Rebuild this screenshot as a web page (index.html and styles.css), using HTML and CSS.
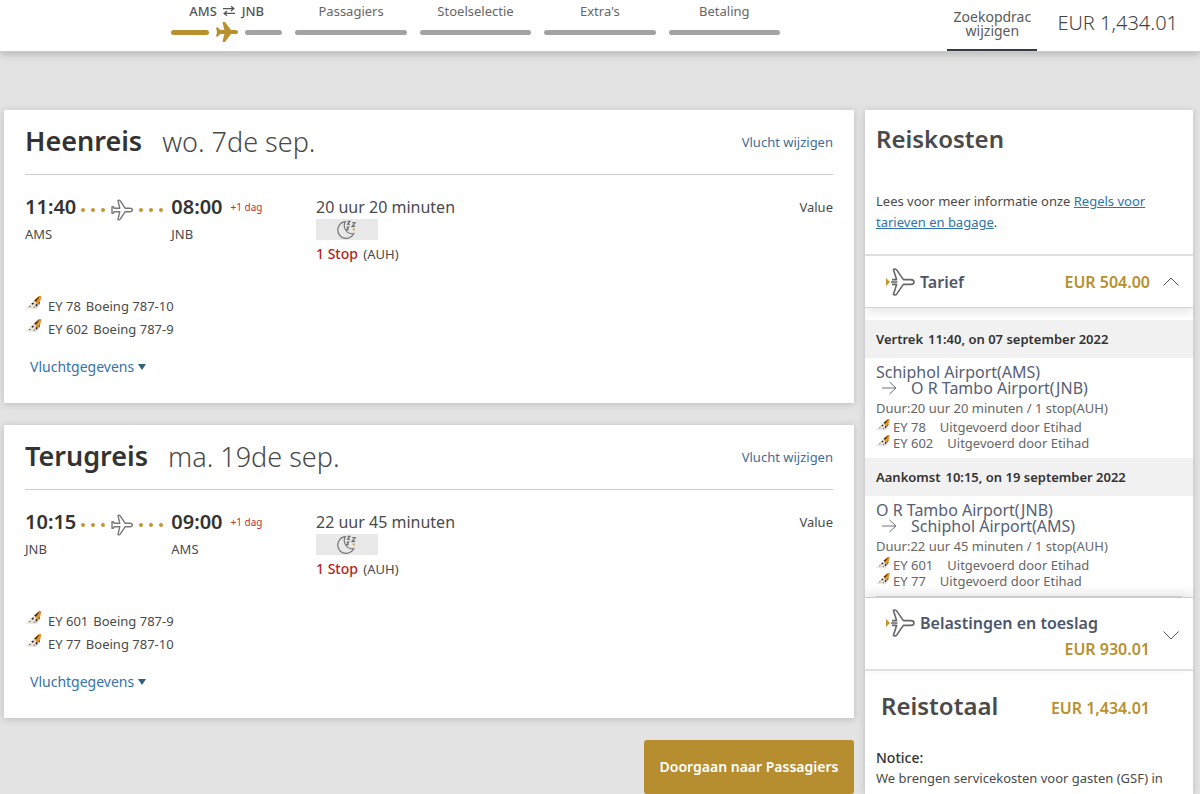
FILE: index.html
```html
<!DOCTYPE html>
<html lang="nl">
<head>
<meta charset="utf-8">
<meta name="viewport" content="width=device-width, initial-scale=1">
<title>Vluchten</title>
<link rel="stylesheet" href="styles.css">
</head>
<body>
<svg class="sprite" aria-hidden="true">
  <symbol id="plane-outline" viewBox="0 0 22 22">
    <path d="M1 7.8H2.3L3.2 9.3H8.8L7 1.6Q8.2.6 9.2 1.9L14.2 9.3H19C20.5 9.3 21.4 10.2 21.4 11S20.5 12.7 19 12.7H14.2L9.2 20.1Q8.2 21.4 7 20.4L8.8 12.7H3.2L2.3 14.2H1Z" fill="none" stroke="#777" stroke-width="1.4" stroke-linejoin="round"/>
  </symbol>
  <symbol id="plane-price" viewBox="0 0 30 28">
    <path d="M1 10 5 14 1 18Z" fill="#c3962f"/>
    <path d="M6 14H12.5M7 11.6H11.6L8.4 1.6C9.2.7 10.8.9 11.8 2.1L18.4 11.6H25.6C27.5 11.6 29 12.7 29 14S27.5 16.4 25.6 16.4H18.4L11.8 25.9C10.8 27.1 9.2 27.3 8.4 26.4L11.6 16.4H7" fill="none" stroke="#666" stroke-width="1.6" stroke-linejoin="round"/>
  </symbol>
  <symbol id="tail" viewBox="0 0 16 14">
    <path d="M0 12.5 12.5.6Q14.5-.3 16 .4L12.6 12Q12 13.5 10 13.3Z" fill="#ebe5dc"/>
    <path d="M8.5 4.4 12.5.6Q14.5-.3 16 .4L14 7.5 11.5 8.5Z" fill="#e3952b"/>
    <path d="M8.8 4.5 14.5.2 10.5 5.5ZM13.2 7 14.6 6 13.4 9.4ZM6 7.2 8 6.4 8.4 8 6.6 8.8ZM10 8.6 11.8 7.8 12 10 10.4 10.8ZM3.2 10.2 5 9.9 4.6 11.2ZM7.8 11 9.2 10.6 9 12.1Z" fill="#2e2422"/>
  </symbol>
  <symbol id="night" viewBox="0 0 20 20">
    <path d="M8.3 1.6A8.4 8.4 0 1 0 16.8 13.6 8.2 8.2 0 0 1 8.3 1.6Z" fill="none" stroke="#777" stroke-width="1.2"/>
    <path d="M10.5 1.2H13L10.5 4.2H13M15 2.8H18.2L15 6.4H18.2M9.6 7H11.8L9.6 9.8H11.8" fill="none" stroke="#666" stroke-width="1.1"/>
    <path d="M15.2 8.6H18L17 11.2Z" fill="#d29a24"/>
  </symbol>
  <symbol id="arrow" viewBox="0 0 16 14">
    <path d="M1 7H15M8.5 1 15 7 8.5 13" fill="none" stroke="#6b7280" stroke-width="1"/>
  </symbol>
</svg>

<header class="topbar">
  <ol class="steps">
    <li class="step step-current">
      <span class="step-label">AMS
        <svg class="swap" viewBox="0 0 12 10" aria-hidden="true"><path d="M0 2.6H10.5M8 .3 10.8 2.6 8 4.9M12 7.4H1.5M4 5.1 1.2 7.4 4 9.7" fill="none" stroke="#555" stroke-width="1.3"/></svg>
        JNB</span>
      <span class="step-track">
        <span class="bar bar-done"></span>
        <svg class="step-plane" viewBox="0 0 22 22" aria-hidden="true"><path d="M0 6.5H2L4.3 8.9H8.4L6.5 1.4Q7.6.2 9.2 1.2L15 8.9H19.4C21 8.9 22 9.9 22 11S21 13.1 19.4 13.1H15L9.2 20.8Q7.6 21.8 6.5 20.6L8.4 13.1H4.3L2 15.5H0L1 11Z" fill="#b8902f"/></svg>
        <span class="bar"></span>
      </span>
    </li>
    <li class="step"><span class="step-label">Passagiers</span><span class="step-track"><span class="bar"></span></span></li>
    <li class="step"><span class="step-label">Stoelselectie</span><span class="step-track"><span class="bar"></span></span></li>
    <li class="step"><span class="step-label">Extra's</span><span class="step-track"><span class="bar"></span></span></li>
    <li class="step"><span class="step-label">Betaling</span><span class="step-track"><span class="bar"></span></span></li>
  </ol>
  <div class="topbar-side">
    <button class="edit-search" type="button">Zoekopdrac<br>wijzigen</button>
    <span class="topbar-total">EUR 1,434.01</span>
  </div>
</header>

<div class="page">
  <main class="trips">
    <section class="trip">
      <div class="trip-head">
        <h2 class="trip-title">Heenreis</h2>
        <span class="trip-date">wo. 7de sep.</span>
        <a class="trip-edit" href="#">Vlucht wijzigen</a>
      </div>
      <div class="trip-body">
        <div class="route">
          <div class="stop"><strong class="time">11:40</strong><span class="code">AMS</span></div>
          <div class="path"><i class="dot"></i><i class="dot"></i><i class="dot"></i><svg class="path-plane" aria-hidden="true"><use href="#plane-outline"/></svg><i class="dot"></i><i class="dot"></i><i class="dot"></i></div>
          <div class="stop"><strong class="time">08:00</strong><span class="code">JNB</span></div>
          <span class="plus-day">+1 dag</span>
        </div>
        <div class="duration">
          <span class="duration-text">20 uur 20 minuten</span>
          <span class="night"><svg class="night-icon" aria-hidden="true"><use href="#night"/></svg></span>
          <span class="stops"><b class="stops-count">1 Stop</b> (AUH)</span>
        </div>
        <span class="fare">Value</span>
      </div>
      <ul class="flights">
        <li class="flight"><svg class="tail" aria-hidden="true"><use href="#tail"/></svg><span>EY 78</span><span>Boeing 787-10</span></li>
        <li class="flight"><svg class="tail" aria-hidden="true"><use href="#tail"/></svg><span>EY 602</span><span>Boeing 787-9</span></li>
      </ul>
      <button class="details" type="button">Vluchtgegevens<span class="caret"></span></button>
    </section>

    <section class="trip">
      <div class="trip-head">
        <h2 class="trip-title">Terugreis</h2>
        <span class="trip-date">ma. 19de sep.</span>
        <a class="trip-edit" href="#">Vlucht wijzigen</a>
      </div>
      <div class="trip-body">
        <div class="route">
          <div class="stop"><strong class="time">10:15</strong><span class="code">JNB</span></div>
          <div class="path"><i class="dot"></i><i class="dot"></i><i class="dot"></i><svg class="path-plane" aria-hidden="true"><use href="#plane-outline"/></svg><i class="dot"></i><i class="dot"></i><i class="dot"></i></div>
          <div class="stop"><strong class="time">09:00</strong><span class="code">AMS</span></div>
          <span class="plus-day">+1 dag</span>
        </div>
        <div class="duration">
          <span class="duration-text">22 uur 45 minuten</span>
          <span class="night"><svg class="night-icon" aria-hidden="true"><use href="#night"/></svg></span>
          <span class="stops"><b class="stops-count">1 Stop</b> (AUH)</span>
        </div>
        <span class="fare">Value</span>
      </div>
      <ul class="flights">
        <li class="flight"><svg class="tail" aria-hidden="true"><use href="#tail"/></svg><span>EY 601</span><span>Boeing 787-9</span></li>
        <li class="flight"><svg class="tail" aria-hidden="true"><use href="#tail"/></svg><span>EY 77</span><span>Boeing 787-10</span></li>
      </ul>
      <button class="details" type="button">Vluchtgegevens<span class="caret"></span></button>
    </section>

    <button class="continue" type="button">Doorgaan naar Passagiers</button>
  </main>

  <aside class="costs">
    <div class="costs-intro">
      <h2 class="costs-title">Reiskosten</h2>
      <p class="costs-text">Lees voor meer informatie onze <a class="rules" href="#">Regels voor tarieven en bagage</a>.</p>
    </div>
    <button class="fold" type="button">
      <svg class="fold-plane" aria-hidden="true"><use href="#plane-price"/></svg>
      <span class="fold-name">Tarief</span>
      <span class="fold-price">EUR 504.00</span>
      <svg class="chevron" viewBox="0 0 16 9" aria-hidden="true"><path d="M.5 8.5 8 1 15.5 8.5" fill="none" stroke="#555"/></svg>
    </button>
    <div class="legs">
      <h3 class="leg-date"><span>Vertrek</span><span>11:40, on 07 september 2022</span></h3>
      <div class="leg">
        <div class="airport">Schiphol Airport(AMS)</div>
        <div class="airport airport-to"><svg class="arrow" aria-hidden="true"><use href="#arrow"/></svg>O R Tambo Airport(JNB)</div>
        <div class="leg-duration">Duur:20 uur 20 minuten / 1 stop(AUH)</div>
        <div class="carrier"><svg class="tail-small" aria-hidden="true"><use href="#tail"/></svg><span class="carrier-code">EY 78</span>Uitgevoerd door Etihad</div>
        <div class="carrier"><svg class="tail-small" aria-hidden="true"><use href="#tail"/></svg><span class="carrier-code">EY 602</span>Uitgevoerd door Etihad</div>
      </div>
      <h3 class="leg-date"><span>Aankomst</span><span>10:15, on 19 september 2022</span></h3>
      <div class="leg">
        <div class="airport">O R Tambo Airport(JNB)</div>
        <div class="airport airport-to"><svg class="arrow" aria-hidden="true"><use href="#arrow"/></svg>Schiphol Airport(AMS)</div>
        <div class="leg-duration">Duur:22 uur 45 minuten / 1 stop(AUH)</div>
        <div class="carrier"><svg class="tail-small" aria-hidden="true"><use href="#tail"/></svg><span class="carrier-code">EY 601</span>Uitgevoerd door Etihad</div>
        <div class="carrier"><svg class="tail-small" aria-hidden="true"><use href="#tail"/></svg><span class="carrier-code">EY 77</span>Uitgevoerd door Etihad</div>
      </div>
      <hr class="legs-end">
    </div>
    <button class="fold fold-tall" type="button">
      <svg class="fold-plane" aria-hidden="true"><use href="#plane-price"/></svg>
      <span class="fold-name">Belastingen en toeslag</span>
      <span class="fold-price">EUR 930.01</span>
      <svg class="chevron" viewBox="0 0 16 9" aria-hidden="true"><path d="M.5.5 8 8 15.5.5" fill="none" stroke="#555"/></svg>
    </button>
    <div class="total">
      <h2 class="costs-title">Reistotaal</h2>
      <span class="fold-price total-price">EUR 1,434.01</span>
    </div>
    <div class="notice">
      <strong class="notice-title">Notice:</strong>
      <p class="costs-text">We brengen servicekosten voor gasten (GSF) in</p>
    </div>
  </aside>
</div>
</body>
</html>
```
FILE: styles.css
```css
* { box-sizing: border-box; }

body {
  margin: 0;
  min-height: 100vh;
  display: flex;
  flex-direction: column;
  background: #e3e3e3;
  color: #4a4a4a;
  font-family: "Noto Sans", "Open Sans", sans-serif;
  font-size: 13px;
}

h2, h3, p, ol, ul { margin: 0; padding: 0; list-style: none; }
button { border: 0; padding: 0; background: none; font: inherit; color: inherit; cursor: pointer; }
a { color: #3f6d97; text-decoration: none; }
.sprite { display: none; }

.topbar {
  display: flex;
  justify-content: space-between;
  height: 52px;
  padding: 0 22px 0 171px;
  background: #fff;
  border-bottom: 1px solid #ccc;
  box-shadow: 0 2px 8px rgba(0, 0, 0, .22);
}
.steps { flex: 0 1 609px; display: grid; grid-template-columns: repeat(5, 1fr); gap: 13px; }
.step { padding-top: 1px; text-align: center; color: #666; }
.step-current { color: #555; font-weight: 500; }
.step-label { display: block; line-height: 20px; }
.swap { width: 12px; height: 10px; margin: 0 3px; }
.step-track { display: flex; align-items: center; gap: 7px; height: 22px; }
.bar { flex: 1; height: 5px; border-radius: 3px; background: #a3a3a3; }
.bar-done { background: #b8902f; }
.step-plane { width: 22px; height: 22px; }
.topbar-side { display: flex; gap: 20px; }
.edit-search { width: 90px; border-bottom: 2px solid #343b46; padding-bottom: 2px; line-height: 14px; font-size: 14px; color: #5a5a5a; }
.topbar-total { line-height: 46px; font-size: 20px; font-weight: 300; color: #444; }

.page {
  flex: 1;
  display: grid;
  grid-template-columns: 1fr 328px;
  gap: 11px;
  padding: 58px 7px 0 4px;
}
.trips { display: flex; flex-direction: column; gap: 22px; }
.trip { padding: 0 21px 24px; background: #fff; box-shadow: 0 1px 7px rgba(0, 0, 0, .18); }
.trip-head { display: flex; align-items: center; height: 65px; border-bottom: 1px solid #ccc; }
.trip-title { padding-bottom: 2px; font-size: 27px; line-height: 32px; font-weight: 600; color: #333; }
.trip-date { margin-left: 20px; font-size: 27px; line-height: 32px; font-weight: 300; color: #4a4a4a; }
.trip-edit { margin-left: auto; }
.trip-body { display: grid; grid-template-columns: 291px 1fr auto; height: 120px; padding-top: 20px; }
.route { display: flex; align-items: flex-start; }
.stop { display: flex; flex-direction: column; gap: 5px; }
.time { font-size: 20px; line-height: 24px; font-weight: 600; color: #333; }
.code { line-height: 20px; }
.path { display: flex; align-items: center; gap: 6px; height: 30px; margin: 0 8px 0 5px; }
.dot { width: 4px; height: 4px; border-radius: 50%; background: #c3962f; }
.path-plane { width: 22px; height: 22px; }
.plus-day { margin-left: 8px; font-size: 10px; line-height: 24px; color: #c0302e; }
.duration { display: flex; flex-direction: column; align-items: flex-start; }
.duration-text { font-size: 16px; line-height: 24px; }
.night { display: flex; align-items: center; justify-content: center; width: 62px; height: 21px; background: #e8e8e8; }
.night-icon { width: 20px; height: 20px; }
.stops { margin-top: 4px; line-height: 20px; }
.stops-count { margin-right: 2px; font-size: 14px; font-weight: 500; color: #b31f1a; }
.fare { line-height: 25px; }
.flight { display: flex; align-items: center; gap: 5px; line-height: 23px; }
.tail { width: 17px; height: 14px; margin-right: 1px; margin-bottom: 8px; }
.details { display: flex; align-items: center; gap: 4px; margin: 14px 0 0 5px; line-height: 24px; font-size: 14px; color: #3572a8; }
.caret { border: 4px solid transparent; border-top: 6px solid #31607f; border-bottom: 0; }
.continue { align-self: flex-end; width: 210px; height: 54px; border-radius: 3px; padding-bottom: 2px; background: #b68e30; color: #fff; font-size: 14px; font-weight: 600; }

.costs { display: flex; flex-direction: column; background: #fff; box-shadow: 0 1px 7px rgba(0, 0, 0, .18); }
.costs-intro { padding: 12px 11px 21px; border-bottom: 2px solid #e3e3e3; }
.costs-title { font-size: 24px; line-height: 34px; font-weight: 600; color: #4a4a4a; }
.costs-intro .costs-text { margin-top: 35px; }
.costs-text { line-height: 21px; }
.rules { color: #2f73a8; text-decoration: underline; }
.fold {
  display: grid;
  grid-template-columns: 30px 1fr auto 16px;
  align-items: center;
  height: 52px;
  padding: 0 14px 0 20px;
  border-bottom: 1px solid #d4d4d4;
  text-align: left;
  font-size: 16px;
  font-weight: 600;
  box-shadow: 0 4px 10px rgba(0, 0, 0, .1);
  clip-path: inset(-12px 0);
}
.fold-plane { width: 30px; height: 28px; }
.fold-name { margin-left: 5px; color: #4d5669; }
.fold-price { margin-right: 13px; text-align: right; font-size: 16px; font-weight: 600; color: #b8902f; }
.chevron { width: 16px; height: 9px; }
.fold-tall { height: 74px; padding-top: 4px; border-top: 1px solid #ccc; border-bottom: 2px solid #e0e0e0; grid-template-rows: 26px 26px; align-content: center; box-shadow: 0 -4px 10px rgba(0, 0, 0, .1); }
.fold-tall .fold-name { grid-column: 2 / 4; }
.fold-tall .fold-price { grid-area: 2 / 2 / 3 / 4; }
.fold-tall .chevron { grid-area: 1 / 4 / 3 / 5; }
.legs { padding-top: 12px; }
.leg-date { display: flex; gap: 5px; padding: 0 11px; background: #f1f1f1; font-size: 13px; line-height: 38px; font-weight: 600; color: #333; }
.leg { padding: 6px 11px 7px; color: #666; }
.airport { font-size: 16px; line-height: 16px; color: #566074; }
.airport-to { display: flex; align-items: center; gap: 14px; padding-left: 5px; }
.arrow { width: 16px; height: 14px; }
.leg-duration { margin: 2px 0 1px; line-height: 20px; }
.carrier { display: flex; align-items: center; line-height: 16px; }
.tail-small { width: 14px; height: 12px; margin-right: 3px; margin-bottom: 4px; }
.carrier-code { margin-right: 14px; }
.legs-end { margin: 0 11px; border: 0; height: 1px; background: #ddd; }
.total { display: flex; align-items: center; justify-content: space-between; height: 70px; padding: 0 30px 0 16px; }
.total-price { padding-top: 4px; }
.notice { padding: 6px 11px 5px; }
.notice-title { display: block; font-size: 14px; line-height: 21px; font-weight: 500; color: #333; }
```
